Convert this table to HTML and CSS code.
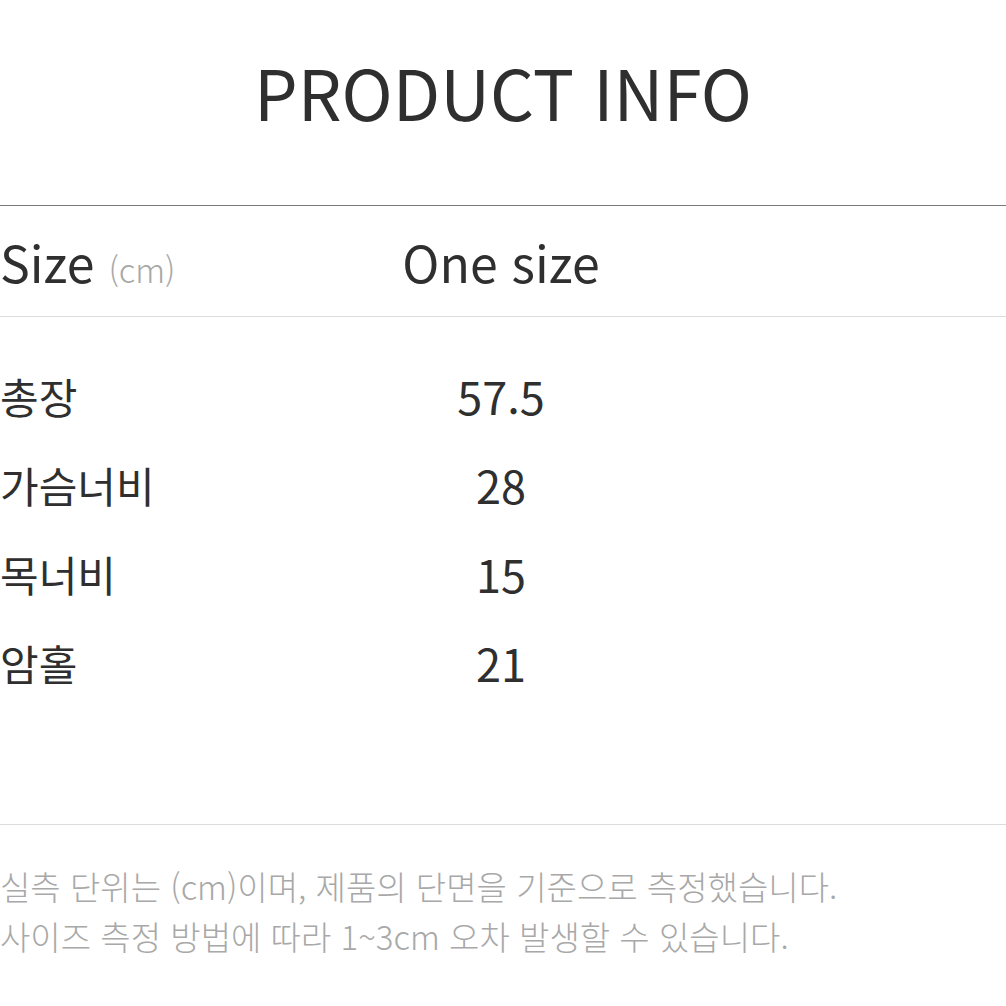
FILE: index.html
```html
<!DOCTYPE html>
<html lang="ko">
<head>
<meta charset="utf-8">
<link rel="stylesheet" href="styles.css">
</head>
<body>
<div class="page">
  <h1 class="title">PRODUCT INFO</h1>
  <div class="head-row">
    <div class="label">Size<span class="unit">(cm)</span></div>
    <div class="value">One size</div>
  </div>
  <div class="rows">
    <div class="row"><div class="label">총장</div><div class="value">57.5</div></div>
    <div class="row"><div class="label">가슴너비</div><div class="value">28</div></div>
    <div class="row"><div class="label">목너비</div><div class="value">15</div></div>
    <div class="row"><div class="label">암홀</div><div class="value">21</div></div>
  </div>
  <div class="note">
    <p>실측 단위는 (cm)이며, 제품의 단면을 기준으로 측정했습니다.</p>
    <p>사이즈 측정 방법에 따라 1~3cm 오차 발생할 수 있습니다.</p>
  </div>
</div>
</body>
</html>
```

FILE: styles.css
```css
html, body {
  margin: 0;
  padding: 0;
  background: #fff;
}
.page {
  width: 1006px;
  font-family: "Noto Sans CJK KR", "Noto Sans", sans-serif;
  color: #2f2f2f;
}
.title {
  margin: 0;
  padding-top: 49px;
  height: 206px;
  box-sizing: border-box;
  text-align: center;
  font-weight: 400;
  font-size: 69px;
  line-height: 84px;
  border-bottom: 1.5px solid #7a7a7a;
}
.head-row, .row {
  display: grid;
  grid-template-columns: 395px 212px;
  align-items: center;
}
.head-row {
  height: 110px;
  border-bottom: 1.5px solid #dcdcdc;
  font-size: 50px;
}
.unit {
  font-size: 33px;
  font-weight: 300;
  color: #a8a8a8;
  margin-left: 14px;
}
.value {
  text-align: center;
}
.rows {
  padding-top: 34px;
  padding-bottom: 117px;
  border-bottom: 1.5px solid #dcdcdc;
}
.row {
  height: 89px;
  font-size: 42px;
}
.row .value {
  font-size: 45px;
}
.note {
  padding-top: 36px;
  color: #a8a8a8;
  font-size: 33px;
  font-weight: 300;
  line-height: 50px;
}
.note p {
  margin: 0;
}
```
